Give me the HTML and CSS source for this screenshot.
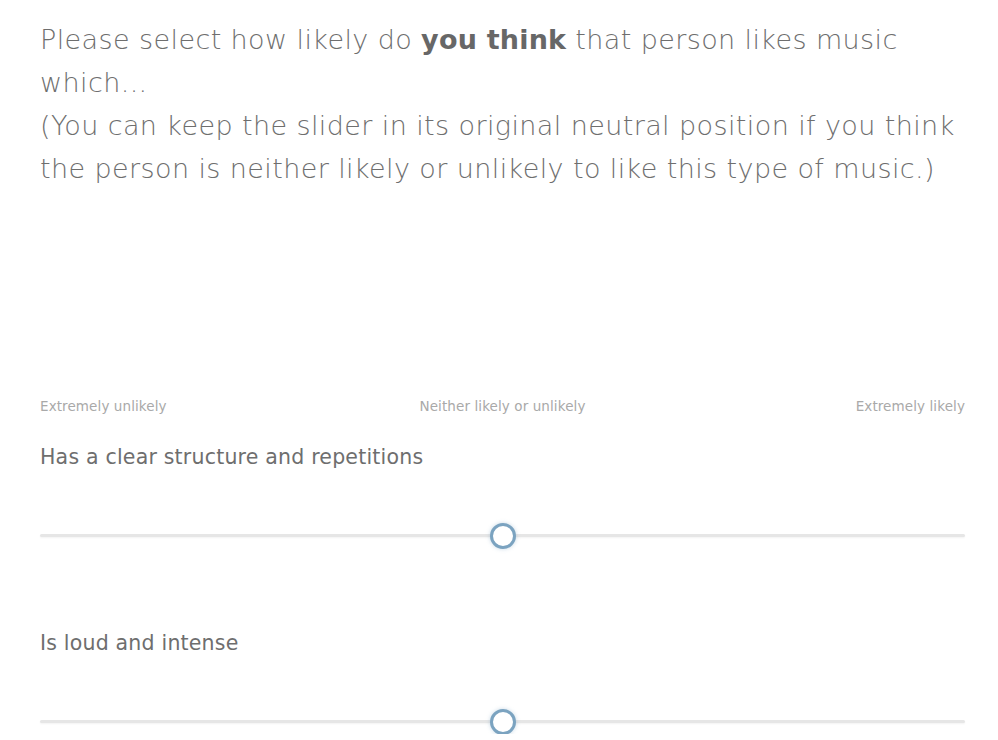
FILE: index.html
```html
<!DOCTYPE html>
<html>
<head>
<meta charset="utf-8">
<link rel="stylesheet" href="styles.css">
</head>
<body>
<main class="page">
  <div class="question">
    <p>Please select how likely do <b>you think</b> that person likes music<br>which...</p>
    <p>(You can keep the slider in its original neutral position if you think the person is neither likely or unlikely to like this type of music.)</p>
  </div>
  <div class="scale-labels">
    <span class="lo">Extremely unlikely</span>
    <span class="mid">Neither likely or unlikely</span>
    <span class="hi">Extremely likely</span>
  </div>
  <div class="item">
    <div class="item-label">Has a clear structure and repetitions</div>
    <div class="slider"><div class="track"></div><div class="thumb"></div></div>
  </div>
  <div class="item">
    <div class="item-label">Is loud and intense</div>
    <div class="slider"><div class="track"></div><div class="thumb"></div></div>
  </div>
</main>
</body>
</html>
```
FILE: styles.css
```css
html, body { margin: 0; padding: 0; background: #fff; overflow: hidden; }
body { font-family: "DejaVu Sans", sans-serif; color: #6e6e6e; }
.page { padding: 18px 33px 0 40px; }
.question p { margin: 0; font-size: 27px; line-height: 43px; letter-spacing: 0.4px; font-weight: 300; }
.question b { font-weight: 700; color: #676767; letter-spacing: 0.2px; }
.scale-labels { display: grid; grid-template-columns: 1fr auto 1fr; margin-top: 207px; font-size: 13.5px; line-height: 18px; color: #a9a9a9; letter-spacing: 0.1px; }
.scale-labels .mid { text-align: center; }
.scale-labels .hi { text-align: right; }
.item-label { font-size: 20.5px; line-height: 30px; margin-top: 27px; letter-spacing: 0.2px; }
.slider { position: relative; height: 26px; margin-top: 50px; }
.track { position: absolute; left: 0; right: 0; top: 12px; height: 3px; background: #e6e6e6; border-radius: 2px; box-shadow: 0 1px 2px rgba(0,0,0,0.05); }
.thumb { position: absolute; left: 50%; top: 1px; width: 20px; height: 20px; margin-left: -13px; border: 3px solid #7ba3c0; border-radius: 50%; background: #fff; box-shadow: 0 0 4px rgba(123,163,192,0.4); }
.item + .item .item-label { margin-top: 80px; }
```
